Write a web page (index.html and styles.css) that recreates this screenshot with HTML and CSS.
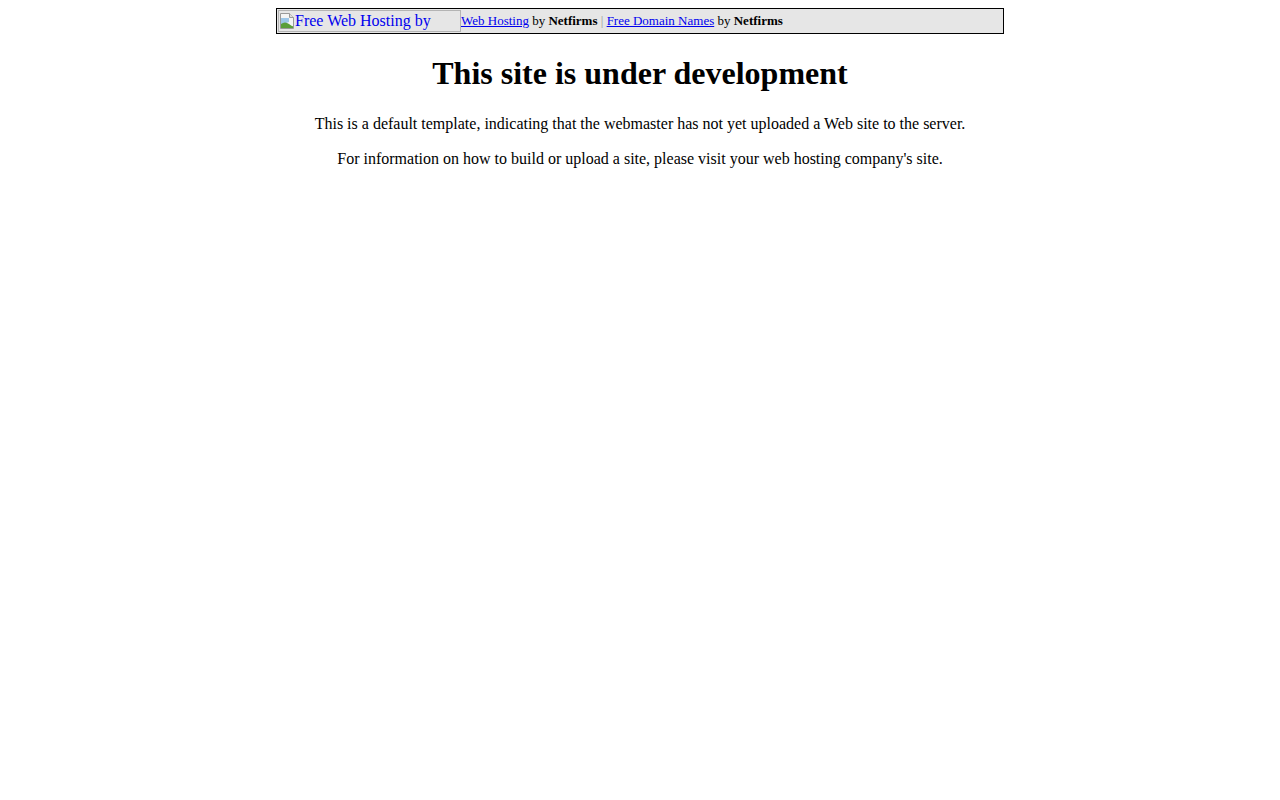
FILE: index.html
```html
<!DOCTYPE html>
<html>
<head>
<meta charset="utf-8">
<title>This site is under development</title>
<link rel="stylesheet" href="styles.css">
</head>
<body>
<table class="bar">
<tr>
<td class="logo-cell"><a href="#" class="broken"><svg class="bicon" width="16" height="16" viewBox="0 0 16 16"><path d="M1.5 0.5 H10.5 L14.5 4.5 V15.5 H1.5 Z" fill="#f4f4f4" stroke="#999"/><path d="M10.5 0.5 V4.5 H14.5" fill="#ddd" stroke="#999"/><path d="M2 5 H10 V9 L2 12 Z" fill="#9cc6e8"/><path d="M2 15 V11 Q6 8 10 11 T14 13 V15 Z" fill="#5a9e3a"/></svg>Free Web Hosting by</a></td>
<td class="links"><a href="#">Web Hosting</a> by <b>Netfirms</b> <span class="sep">|</span> <a href="#">Free Domain Names</a> by <b>Netfirms</b></td>
</tr>
</table>
<h1 class="title">This site is under development</h1>
<p class="msg">This is a default template, indicating that the webmaster has not yet uploaded a Web site to the server.</p>
<p class="msg">For information on how to build or upload a site, please visit your web hosting company's site.</p>
</body>
</html>
```
FILE: styles.css
```css
body {
  margin: 8px;
  font-family: "Liberation Serif", "Times New Roman", serif;
  font-size: 16px;
  color: #000;
  background: #fff;
}
.bar {
  width: 728px;
  margin: 0 auto;
  border: 1px solid #000;
  border-collapse: separate;
  border-spacing: 0;
  background: #e6e6e6;
}
.bar td {
  padding: 1px;
  vertical-align: middle;
}
.logo-cell {
  width: 183px;
  padding-right: 0 !important;
}
.broken {
  display: flex;
  align-items: center;
  box-sizing: border-box;
  width: 183px;
  height: 22px;
  border: 1px solid #b4b4b4;
  color: #0000ee;
  text-decoration: none;
  font-size: 16px;
  line-height: 18px;
  overflow: hidden;
  white-space: nowrap;
}
.bicon {
  flex: none;
  margin-top: -1px;
}
.links {
  font-size: 13px;
  padding-left: 0 !important;
  white-space: nowrap;
}
.links a {
  color: #0000ee;
}
.sep {
  color: #999;
}
.title {
  text-align: center;
  font-size: 32px;
  line-height: 37px;
  margin: 21.44px 0;
}
.msg {
  text-align: center;
  line-height: 19px;
  margin: 16px 0;
}
```
